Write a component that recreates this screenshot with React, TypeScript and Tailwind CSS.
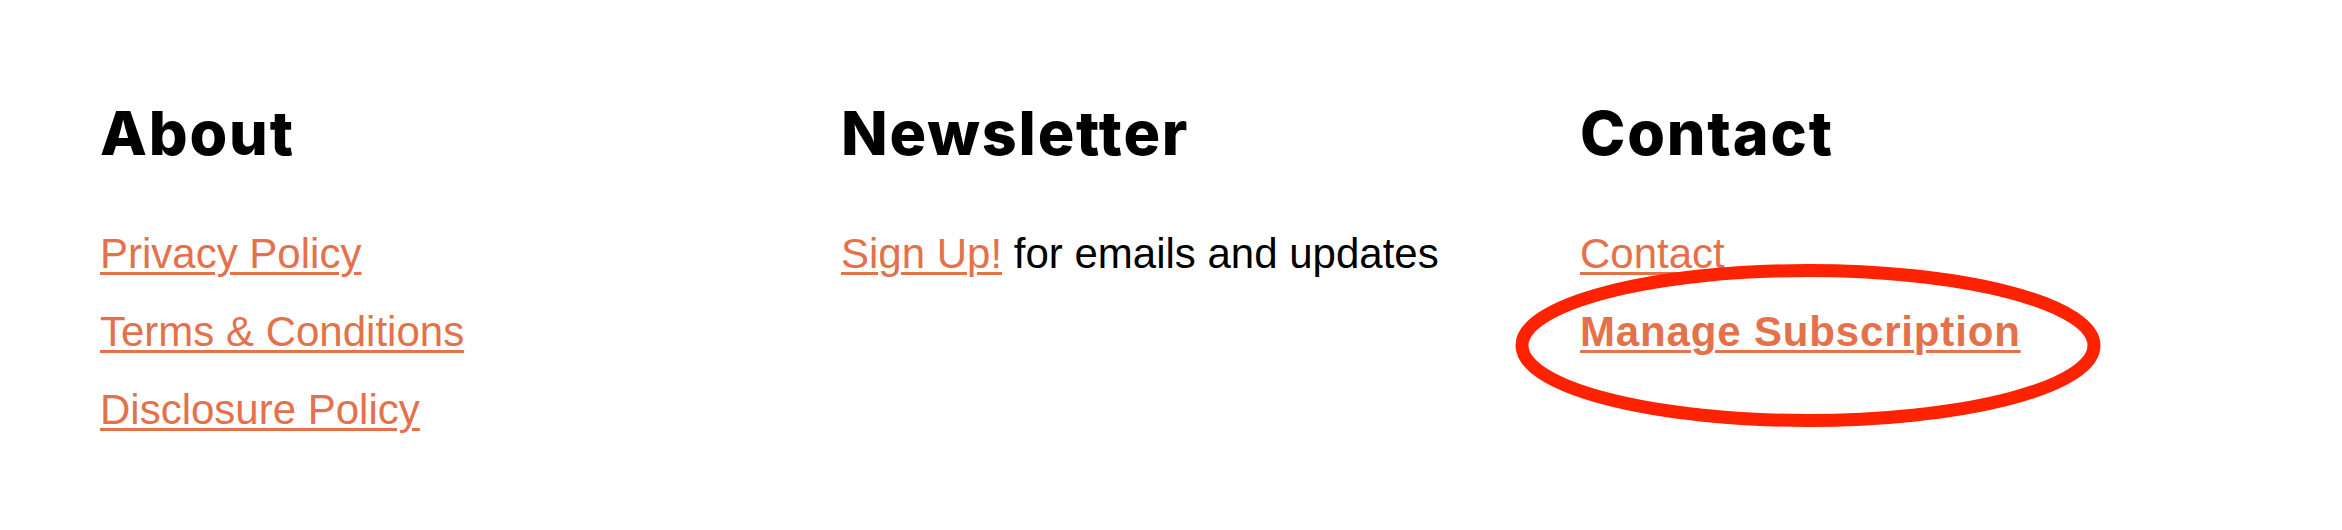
import type { ReactNode } from "react"

const heading = "font-['Inter',sans-serif] text-[61px] font-extrabold leading-none tracking-[0.03em] text-black"
const link =
  "text-[#e4714a] underline decoration-[3px] underline-offset-[4px] hover:text-[#c95a35]"

function FooterColumn({ title, children }: { title: string; children: ReactNode }) {
  return (
    <div>
      <h2 className={heading}>{title}</h2>
      <div className="mt-[65px] flex flex-col gap-[28px]">{children}</div>
    </div>
  )
}

export default function App() {
  return (
    <footer className="relative h-[530px] w-full bg-white font-['Liberation_Sans',Arial,sans-serif] text-[42px] leading-[50px] text-black">
      <div className="grid grid-cols-[741px_739px_1fr] pl-[100px] pt-[103px]">
        <FooterColumn title="About">
          <a href="#" className={link}>
            Privacy Policy
          </a>
          <a href="#" className={link}>
            Terms &amp; Conditions
          </a>
          <a href="#" className={link}>
            Disclosure Policy
          </a>
        </FooterColumn>

        <FooterColumn title="Newsletter">
          <p>
            <a href="#" className={link}>
              Sign Up!
            </a>{" "}
            for emails and updates
          </p>
        </FooterColumn>

        <FooterColumn title="Contact">
          <a href="#" className={link}>
            Contact
          </a>
          <a href="#" className={`${link} font-bold tracking-[0.02em]`}>
            Manage Subscription
          </a>
        </FooterColumn>
      </div>

      {/* hand-drawn highlight around the subscription link */}
      <svg
        className="pointer-events-none absolute left-[1515px] top-[264px]"
        width="586"
        height="163"
        viewBox="0 0 586 163"
        fill="none"
      >
        <ellipse cx="293" cy="81.5" rx="286" ry="75" stroke="#ff2200" strokeWidth="13" />
      </svg>
    </footer>
  )
}
